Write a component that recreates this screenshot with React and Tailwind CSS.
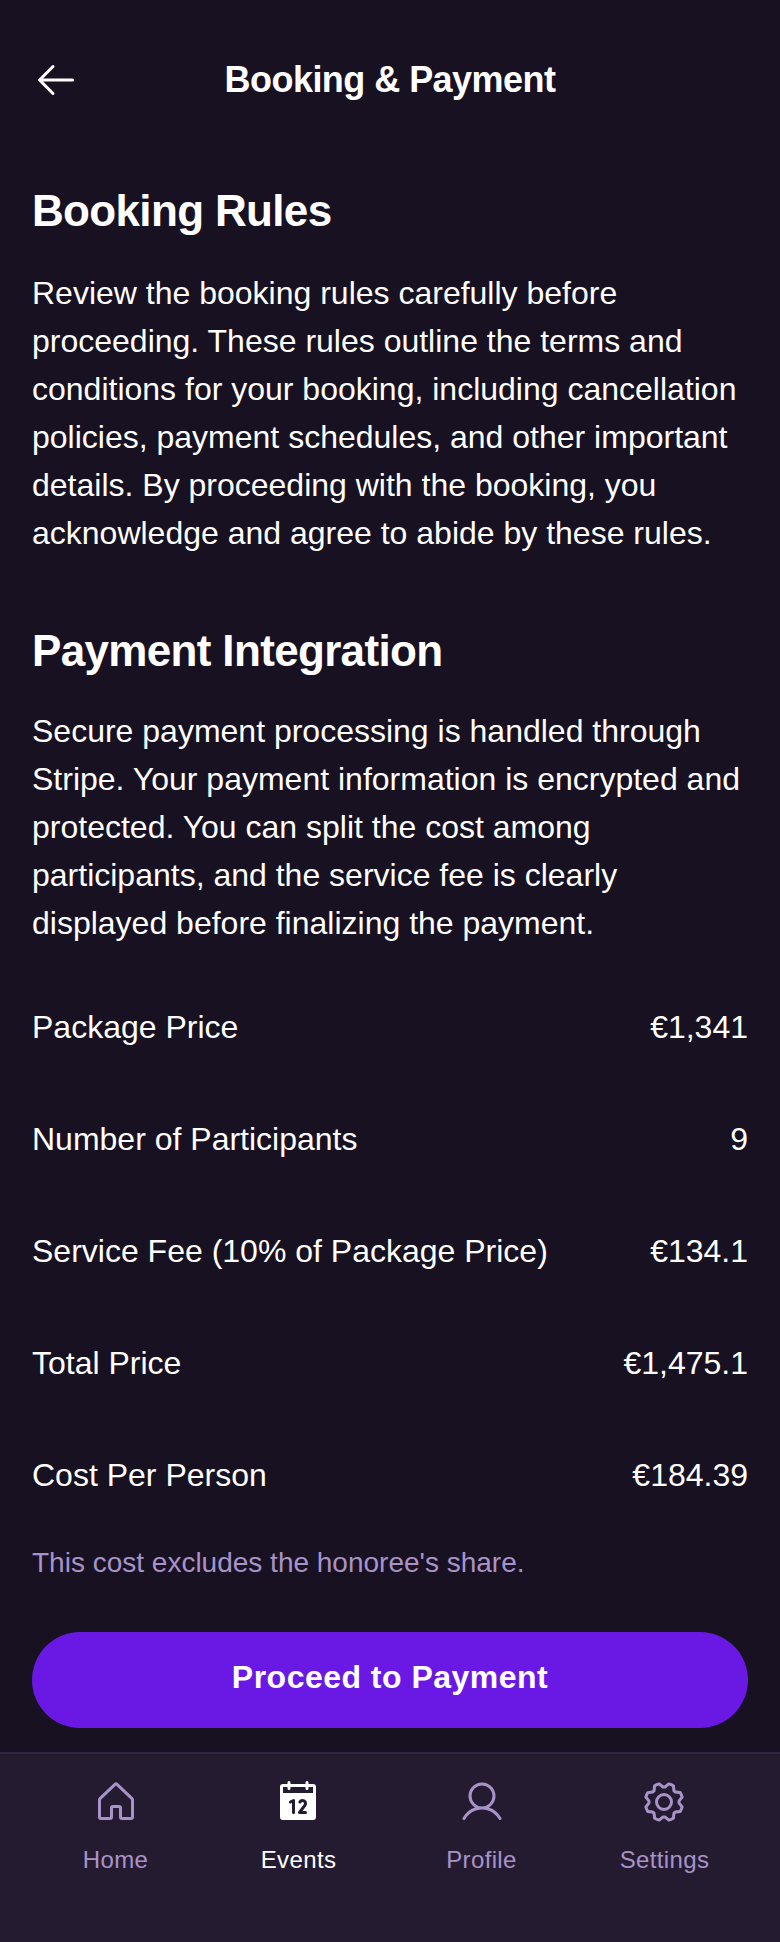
import { PiArrowLeft, PiUser, PiGear } from "react-icons/pi";

function HouseIcon() {
  return (
    <svg className="size-12" viewBox="0 0 256 256" fill="currentColor">
      <path d="M218.83,103.77l-80-75.48a1.14,1.14,0,0,1-.11-.11,16,16,0,0,0-21.53,0l-.11.11L37.17,103.77A16,16,0,0,0,32,115.55V208a16,16,0,0,0,16,16H96a16,16,0,0,0,16-16V160h32v48a16,16,0,0,0,16,16h48a16,16,0,0,0,16-16V115.55A16,16,0,0,0,218.83,103.77ZM208,208H160V160a16,16,0,0,0-16-16H112a16,16,0,0,0-16,16v48H48V115.55l.11-.1L128,40l79.9,75.43.11.1Z" />
    </svg>
  );
}

function CalendarIcon() {
  return (
    <svg className="size-12" viewBox="0 0 256 256" fill="currentColor">
      <path d="M208,32H184V24a8,8,0,0,0-16,0v8H88V24a8,8,0,0,0-16,0v8H48A16,16,0,0,0,32,48V208a16,16,0,0,0,16,16H208a16,16,0,0,0,16-16V48A16,16,0,0,0,208,32ZM112,184a8,8,0,0,1-16,0V132.94l-4.42,2.22a8,8,0,0,1-7.16-14.32l16-8A8,8,0,0,1,112,120Zm56-8a8,8,0,0,1,0,16H136a8,8,0,0,1-6.4-12.8l28.78-38.37A8,8,0,1,0,145.07,132a8,8,0,1,1-13.85-8A24,24,0,0,1,176,136a23.76,23.76,0,0,1-4.84,14.45L152,176ZM48,80V48H72v8a8,8,0,0,0,16,0V48h80v8a8,8,0,0,0,16,0V48h24V80Z" />
    </svg>
  );
}

const rows = [
  ["Package Price", "€1,341"],
  ["Number of Participants", "9"],
  ["Service Fee (10% of Package Price)", "€134.1"],
  ["Total Price", "€1,475.1"],
  ["Cost Per Person", "€184.39"],
];

const tabs = [
  { label: "Home", icon: <HouseIcon />, nudge: "" },
  { label: "Events", icon: <CalendarIcon />, nudge: "pr-px", active: true },
  { label: "Profile", icon: <PiUser className="size-12" />, nudge: "" },
  { label: "Settings", icon: <PiGear className="size-12" />, nudge: "pr-px" },
];

const heading = "px-8 text-[44px] leading-[55px] font-bold tracking-[-0.015em]";
const body = "px-8 text-[32px] leading-[48px]";

export default function App() {
  return (
    <div className="flex min-h-[1942px] w-full flex-col justify-between bg-[#181121] font-['Liberation_Sans',Arial,sans-serif] text-white">
      <div>
        <header className="flex items-center px-8 pt-8 pb-4">
          <button className="flex size-24 shrink-0 items-center" aria-label="Back">
            <PiArrowLeft className="size-12" />
          </button>
          <h1 className="flex-1 pr-24 pb-0.5 text-center text-[36px] leading-[45px] font-bold tracking-[-0.015em]">
            Booking &amp; Payment
          </h1>
        </header>
        <h2 className={`${heading} pt-[39px] pb-[25px]`}>Booking Rules</h2>
        <p className={`${body} pt-1.5 pb-6.5`}>
          Review the booking rules carefully before proceeding. These rules outline the terms and conditions for your
          booking, including cancellation policies, payment schedules, and other important details. By proceeding with
          the booking, you acknowledge and agree to abide by these rules.
        </p>
        <h2 className={`${heading} pt-10 pb-6`}>Payment Integration</h2>
        <p className={`${body} pt-[5px] pb-[27px]`}>
          Secure payment processing is handled through Stripe. Your payment information is encrypted and protected. You
          can split the cost among participants, and the service fee is clearly displayed before finalizing the payment.
        </p>
        {rows.map(([label, value]) => (
          <div key={label} className="flex h-28 items-center justify-between px-8 pb-1.5 text-[32px] leading-[48px]">
            <span>{label}</span>
            <span>{value}</span>
          </div>
        ))}
        <p className="px-8 pt-2 pb-6 text-[28px] leading-[42px] text-[#a893c8]">
          This cost excludes the honoree's share.
        </p>
      </div>
      <div>
        <div className="flex px-8 py-6">
          <button className="flex h-24 flex-1 items-center justify-center rounded-full bg-[#6a19e5] pb-1.5 text-[32px] leading-[48px] font-bold tracking-[0.015em]">
            Proceed to Payment
          </button>
        </div>
        <nav className="flex gap-4 border-t-2 border-[#342447] bg-[#251b31] px-8 pt-4 pb-16">
          {tabs.map(({ label, icon, nudge, active }) => (
            <a
              key={label}
              className={`flex flex-1 flex-col items-center gap-2 ${active ? "text-white" : "text-[#a893c8]"}`}
            >
              <span className={`flex h-16 items-center ${nudge}`}>{icon}</span>
              <span className="text-2xl leading-9 font-medium tracking-[0.015em]">{label}</span>
            </a>
          ))}
        </nav>
      </div>
    </div>
  );
}
